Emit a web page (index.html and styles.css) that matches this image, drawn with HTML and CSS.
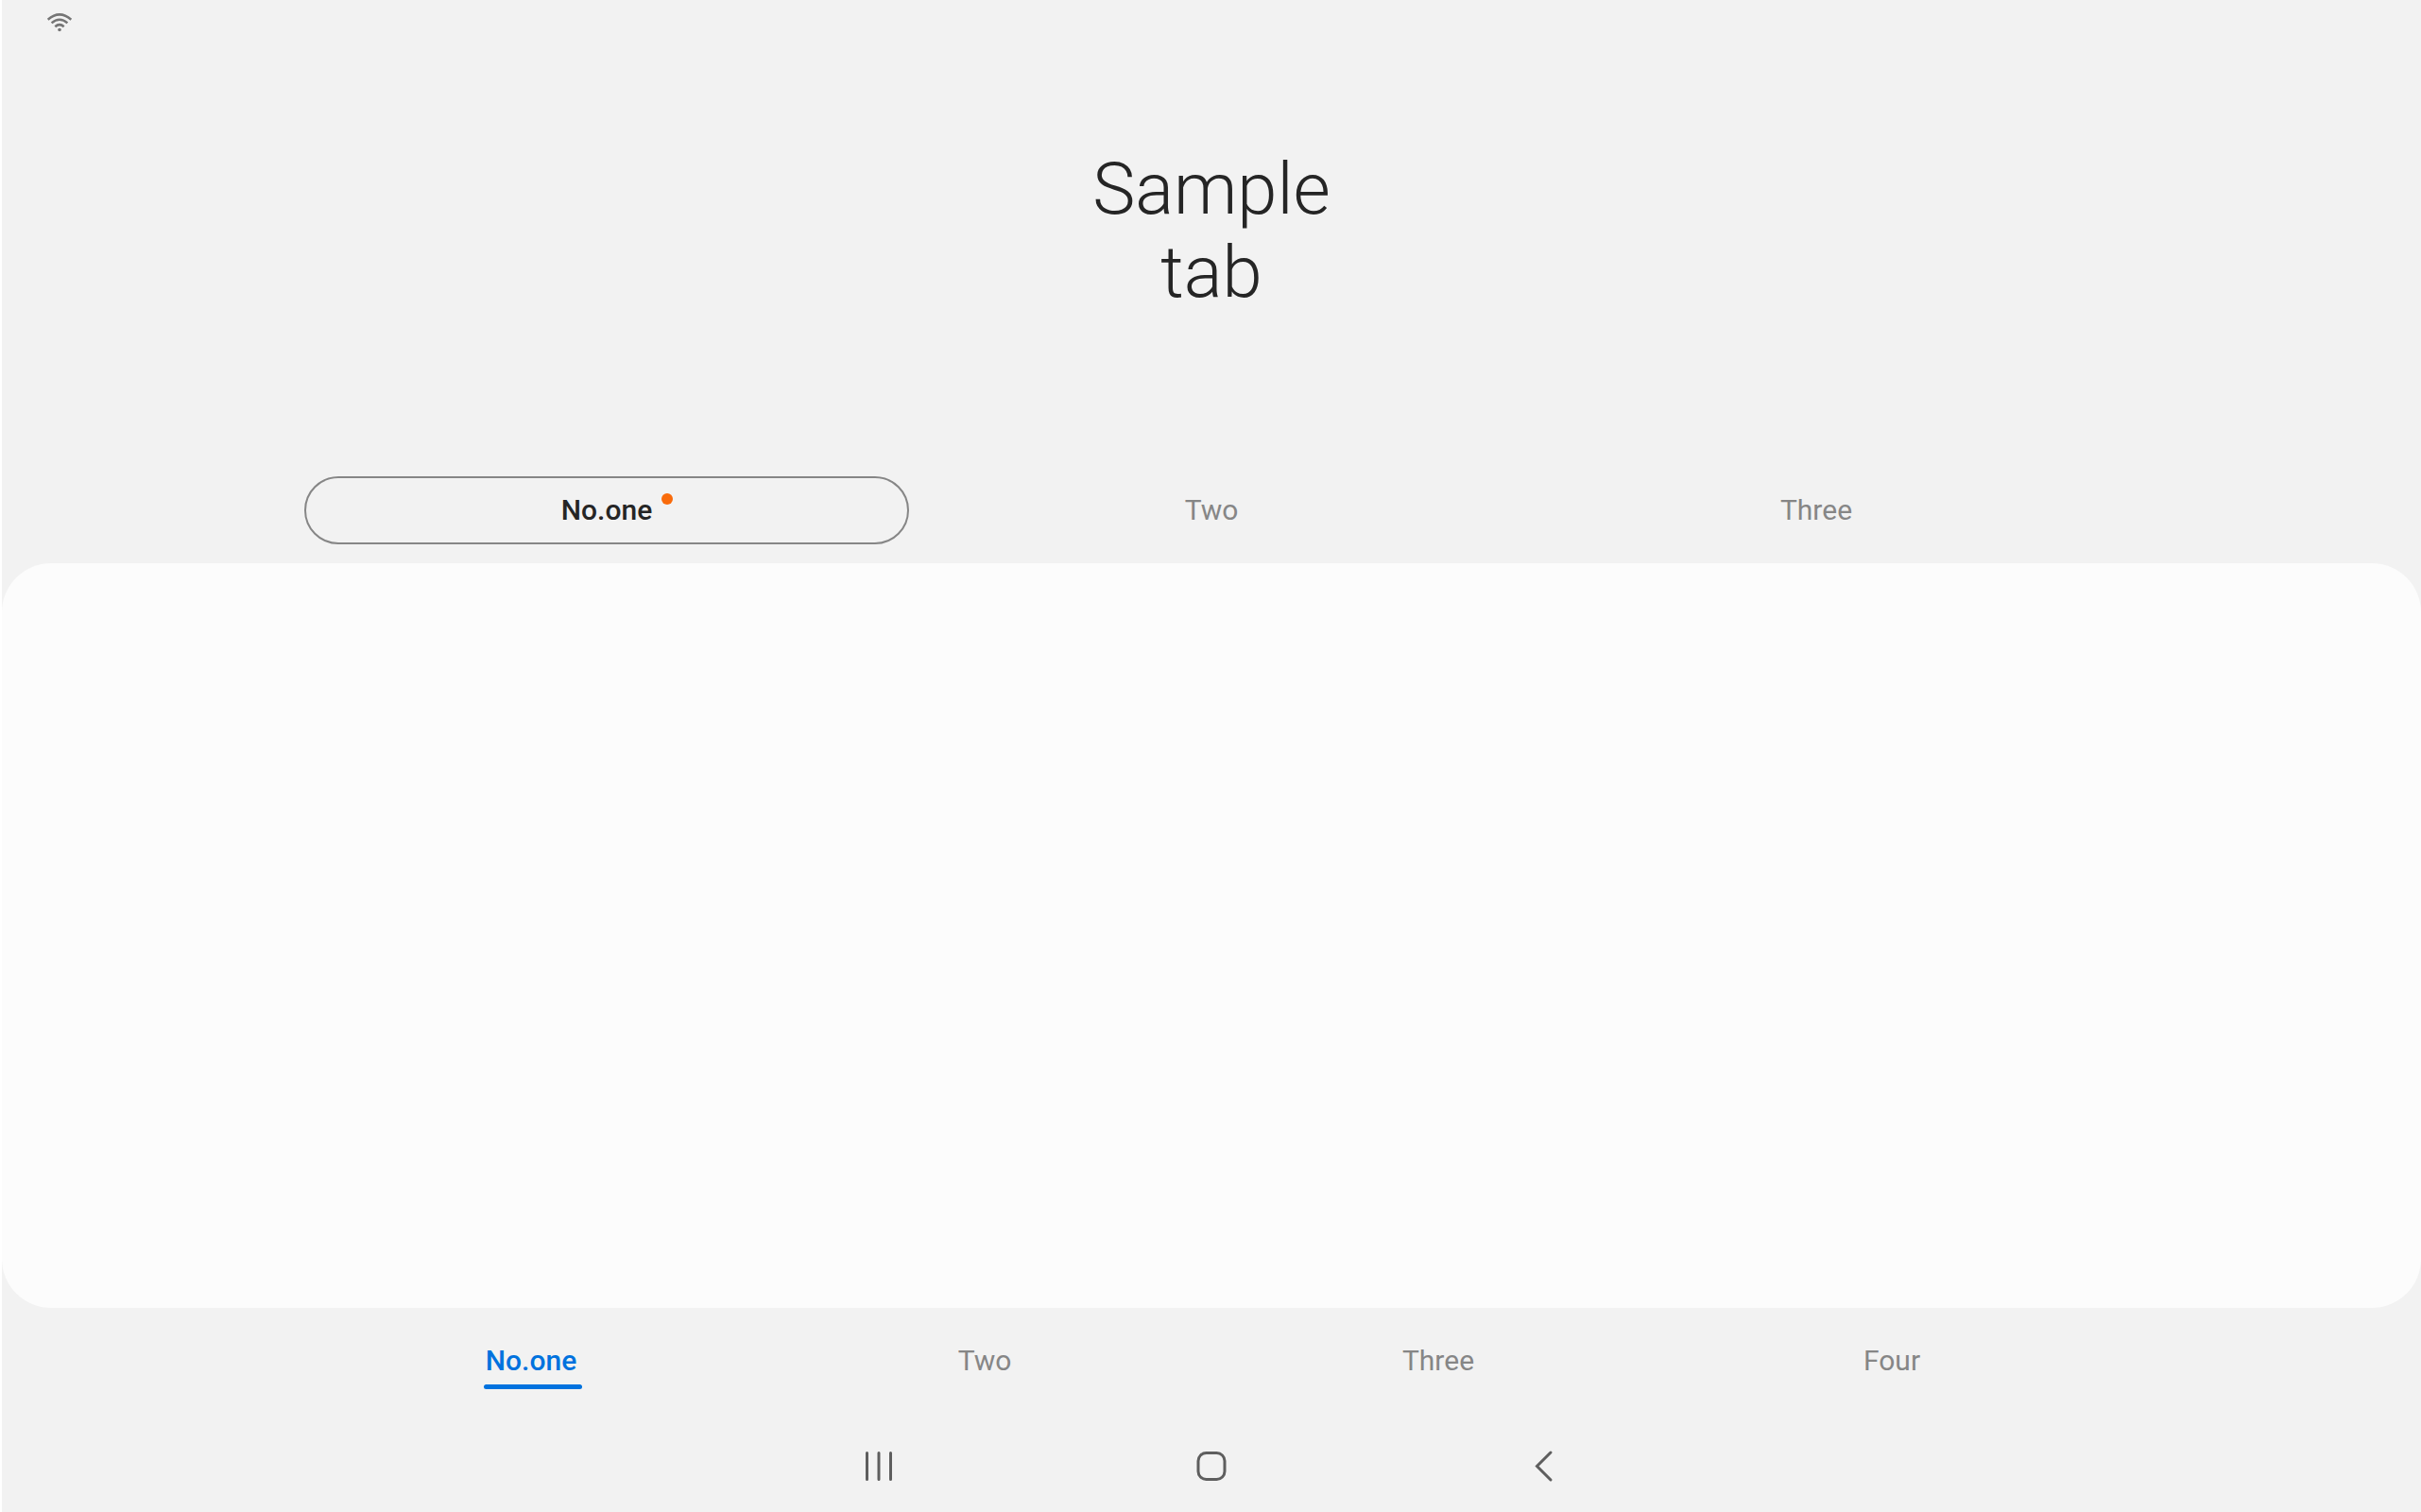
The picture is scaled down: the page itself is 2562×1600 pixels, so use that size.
FILE: index.html
```html
<!DOCTYPE html>
<html lang="en">
<head>
<meta charset="utf-8">
<meta name="viewport" content="width=device-width, initial-scale=1">
<title>Sample tab</title>
<link rel="stylesheet" href="styles.css">
</head>
<body>
<div class="screen">
  <header class="status-bar">
    <svg class="wifi" viewBox="0 0 28 20" aria-label="Wi-Fi" role="img">
      <g fill="none" stroke="#757575" stroke-width="2.5">
        <path d="M1.700 6.700Q14-4 26.300 6.700"/>
        <path d="M5.600 10.400Q14 3.200 22.400 10.400"/>
        <path d="M9.300 14.200Q14 10 18.700 14.200"/>
      </g>
      <circle cx="14" cy="17.500" r="1.800" fill="#757575"/>
    </svg>
  </header>
  <h1 class="title">Sample<br>tab</h1>
  <nav class="tabs sub-tabs" aria-label="Sub tabs">
    <button class="tab sub-tab selected" type="button"><span class="label">No.one<span class="dot"></span></span></button>
    <button class="tab sub-tab" type="button">Two</button>
    <button class="tab sub-tab" type="button">Three</button>
  </nav>
  <main class="content"></main>
  <nav class="tabs main-tabs" aria-label="Main tabs">
    <button class="tab main-tab current" type="button"><span class="label">No.one</span></button>
    <button class="tab main-tab" type="button">Two</button>
    <button class="tab main-tab" type="button">Three</button>
    <button class="tab main-tab" type="button">Four</button>
  </nav>
  <footer class="system-nav">
    <button class="key" type="button" aria-label="Recents">
      <svg class="key-icon" viewBox="0 0 36 36"><path d="M5.500 4.500v28M18 4.500v28M30.500 4.500v28" fill="none" stroke="#5e5e5e" stroke-width="3" stroke-linecap="round"/></svg>
    </button>
    <button class="key" type="button" aria-label="Home">
      <svg class="key-icon" viewBox="0 0 36 36"><rect x="4" y="4.500" width="28" height="28" rx="8.500" fill="none" stroke="#5e5e5e" stroke-width="3"/></svg>
    </button>
    <button class="key" type="button" aria-label="Back">
      <svg class="key-icon" viewBox="0 0 36 36"><path d="M25 4L10.500 18.500L25 33" fill="none" stroke="#5e5e5e" stroke-width="3" stroke-linecap="round"/></svg>
    </button>
  </footer>
</div>
</body>
</html>
```
FILE: styles.css
```css
* {
  box-sizing: border-box;
}

body {
  margin: 0;
  background: #fff;
  font-family: Roboto, "Liberation Sans", sans-serif;
  color: #252525;
}

.screen {
  display: flex;
  flex-direction: column;
  min-height: 100vh;
  margin-left: 2px;
  background: #f2f2f2;
}

.status-bar {
  display: flex;
  height: 48px;
  padding: 14px 47px;
}

.wifi {
  width: 28px;
  height: 20px;
}

.title {
  margin: 108px 0 172px;
  font-size: 76px;
  font-weight: 300;
  line-height: 88px;
  text-align: center;
}

button {
  border: 0;
  padding: 0;
  background: none;
  font: inherit;
  color: inherit;
}

.tabs {
  display: flex;
  width: 75%;
  margin: 0 auto;
}

.tab {
  flex: 1;
  font-size: 30px;
  line-height: 36px;
  color: #868686;
}

.label {
  position: relative;
  display: inline-block;
}

.sub-tabs {
  padding-bottom: 20px;
}

.sub-tab {
  height: 72px;
  border: 2px solid transparent;
  border-radius: 36px;
}

.selected {
  border-color: #868686;
  font-weight: 500;
  color: #252525;
}

.dot {
  position: absolute;
  top: 0;
  left: calc(100% + 10px);
  width: 12px;
  height: 12px;
  border-radius: 50%;
  background: #f96b0b;
}

.content {
  flex: 1;
  border-radius: 52px;
  background: #fcfcfc;
}

.main-tabs {
  padding-bottom: 7px;
}

.main-tab {
  height: 112px;
}

.current {
  font-weight: 500;
  color: #0072de;
}

.current .label::after {
  content: "";
  position: absolute;
  right: -6px;
  bottom: -12px;
  left: -2px;
  height: 5px;
  border-radius: 3px;
  background: #0072de;
}

.system-nav {
  display: flex;
  justify-content: center;
  gap: 256px;
  padding-bottom: 1px;
}

.key {
  display: flex;
  align-items: center;
  justify-content: center;
  width: 96px;
  height: 96px;
}

.key-icon {
  width: 36px;
  height: 36px;
}
```
